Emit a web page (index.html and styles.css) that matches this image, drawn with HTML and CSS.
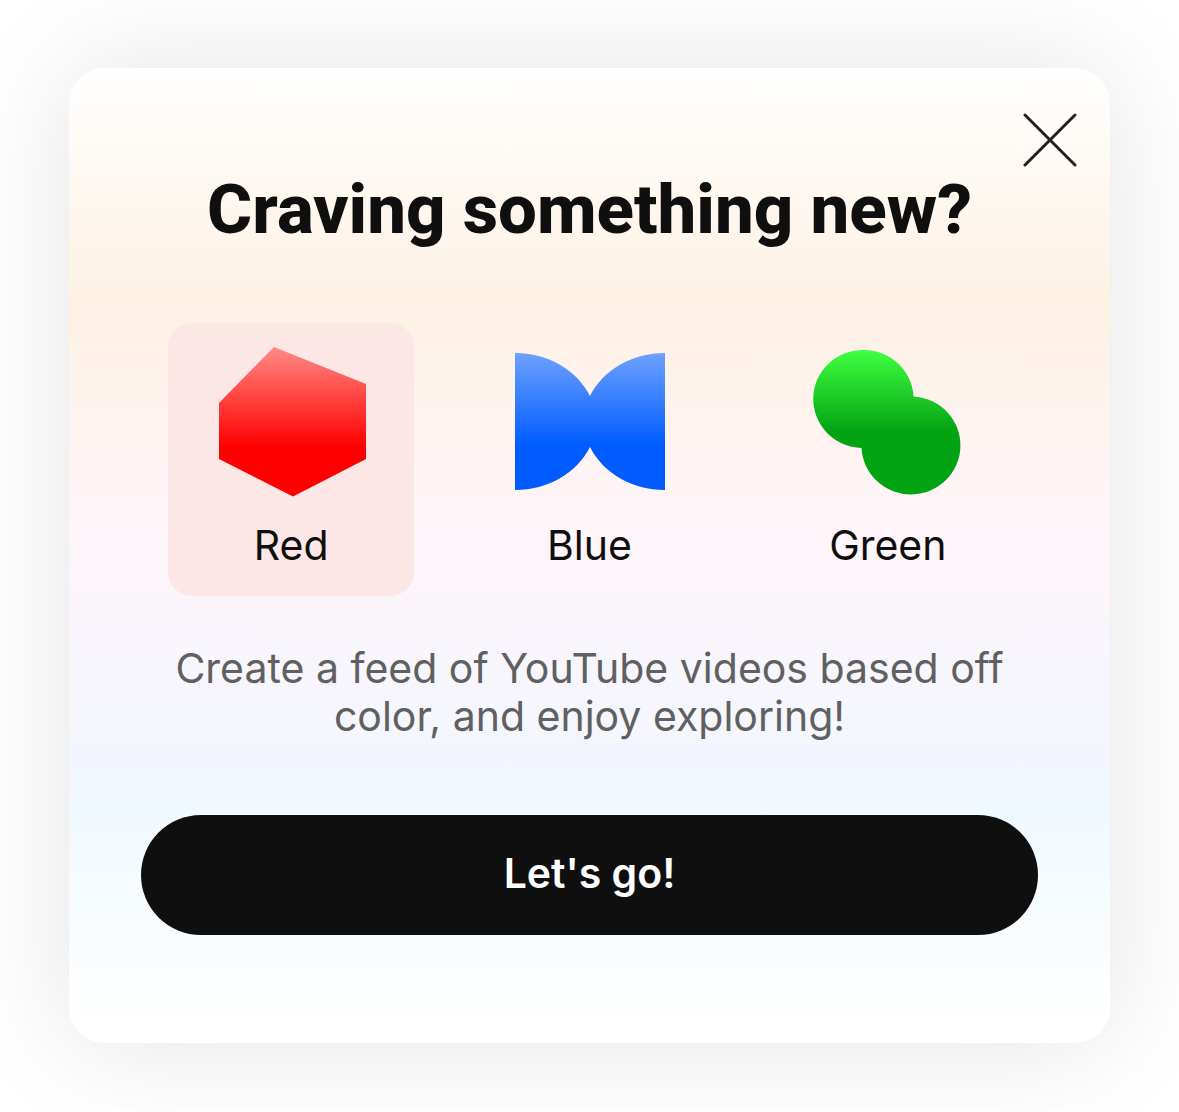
FILE: index.html
```
<!DOCTYPE html>
<html lang="en">
<head>
    <meta charset="UTF-8">
    <meta name="viewport" content="width=device-width, initial-scale=1.0">
    <title>Craving something new?</title>
    <link rel="stylesheet" href="styles.css">
</head>
<body>
    <form class="card">
        <button type="button" class="close" aria-label="Close">
            <svg viewBox="0 0 54 54" width="54" height="54">
                <path d="M2 2L52 52M52 2L2 52" fill="none" stroke="#212121" stroke-width="3" stroke-linecap="round"/>
            </svg>
        </button>

        <h1>Craving something new?</h1>

        <!-- Color choices -->
        <div class="choices" role="radiogroup" aria-label="Color">
            <label class="choice">
                <input type="radio" name="color" value="red" checked>
                <svg viewBox="-1 0 150 150" width="150" height="150" aria-hidden="true">
                    <defs>
                        <linearGradient id="redFill" x1="0" y1="0" x2="0" y2="1">
                            <stop offset="0" stop-color="#ff8a84"/>
                            <stop offset="0.67" stop-color="#ff0000"/>
                        </linearGradient>
                    </defs>
                    <path d="M57 0L149 37V112L76 149.500L2 112V56Z" fill="url(#redFill)"/>
                </svg>
                <span>Red</span>
            </label>
            <label class="choice">
                <input type="radio" name="color" value="blue">
                <svg viewBox="-1 0 150 150" width="150" height="150" aria-hidden="true">
                    <defs>
                        <linearGradient id="blueFill" x1="0" y1="0" x2="0" y2="1">
                            <stop offset="0" stop-color="#6ea1ff"/>
                            <stop offset="0.67" stop-color="#005cff"/>
                        </linearGradient>
                    </defs>
                    <path d="M0 6C33 6 62 23 75 49C88 23 117 6 150 6V143C117 143 88 126 75 100C62 126 33 143 0 143Z" fill="url(#blueFill)"/>
                </svg>
                <span>Blue</span>
            </label>
            <label class="choice">
                <input type="radio" name="color" value="green">
                <svg viewBox="-1 0 150 150" width="150" height="150" aria-hidden="true">
                    <defs>
                        <linearGradient id="greenFill" x1="0" y1="0" x2="0" y2="1">
                            <stop offset="0" stop-color="#40ff40"/>
                            <stop offset="0.56" stop-color="#03a414"/>
                        </linearGradient>
                    </defs>
                    <path d="M50 3A49.500 49 0 0 1 99.500 49.500A49.500 49 0 1 1 47.500 101A49.500 49 0 1 1 50 3Z" fill="url(#greenFill)"/>
                </svg>
                <span>Green</span>
            </label>
        </div>

        <p>Create a feed of YouTube videos based off color, and enjoy exploring!</p>

        <button type="submit" class="go">Let's go!</button>
    </form>
</body>
</html>
```
FILE: styles.css
```
* {
    box-sizing: border-box;
}

body {
    margin: 0;
    padding: 68px 69px;
    background-color: white;
    color: #0f0f0f;
    font-family: Inter, Roboto, sans-serif;
    font-size: 41px;
    line-height: 48px;
}

.card {
    position: relative;
    padding: 102px 72px 108px;
    border-radius: 36px;
    background: linear-gradient(to bottom, #ffffff 0%, #fdf1e4 24%, #fff5fa 47%, #f2f6ff 73%, #f0f9ff 76%, #ffffff 98%);
    box-shadow: 0 0 120px rgba(0, 0, 0, 0.11);
    text-align: center;
}

.close {
    position: absolute;
    top: 45px;
    right: 33px;
    padding: 0;
    border: none;
    background: none;
    cursor: pointer;
}

.close svg {
    display: block;
}

h1 {
    margin: 0 0 73px;
    font-family: Roboto, "Open Sans", sans-serif;
    font-size: 69px;
    font-weight: 800;
    line-height: 80px;
}

.choices {
    display: grid;
    grid-template-columns: repeat(3, 1fr);
    gap: 52px;
    padding: 0 27px;
}

.choice {
    display: flex;
    flex-direction: column;
    align-items: center;
    gap: 24px;
    padding: 24px 0 27px;
    border-radius: 24px;
    cursor: pointer;
}

.choice:has(input:checked) {
    background-color: #fde6e6;
}

.choice input {
    position: absolute;
    opacity: 0;
}

.choice svg {
    overflow: visible;
}

p {
    margin: 48px 0 75px;
    padding: 0 24px;
    color: #606060;
}

.go {
    display: block;
    width: 100%;
    height: 120px;
    padding: 0 0 4px;
    border: none;
    border-radius: 60px;
    background-color: #0f0f0f;
    color: white;
    font: inherit;
    font-weight: 600;
    cursor: pointer;
}
```
